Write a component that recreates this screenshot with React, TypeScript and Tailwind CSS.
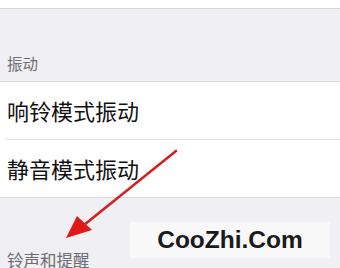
import * as React from 'react';

const cjk = { fontFamily: '"Noto Sans CJK SC", "Noto Sans", sans-serif' };

export default function App() {
	return (
		<div className="relative w-[340px] h-[268px] overflow-hidden bg-[#efeff4]" style={cjk}>
			<div className="h-[9px] bg-white border-b border-[#d6d6da]" />
			<div className="h-[72px] flex items-end px-[7px] pb-[6px]">
				<span className="text-[15.5px] leading-[24px] text-[#6d6d72]">振动</span>
			</div>
			<div className="bg-white border-y border-[#dcdce0]">
				<div className="h-[57px] flex items-center px-[7px]">
					<span className="text-[22px] text-[#111]">响铃模式振动</span>
				</div>
				<div className="ml-[5px] h-px bg-[#e2e2e5]" />
				<div className="h-[57px] flex items-center px-[7px]">
					<span className="text-[22px] text-[#111]">静音模式振动</span>
				</div>
			</div>
			<div className="pt-[50px] px-[7px]">
				<span className="text-[16.5px] leading-[24px] text-[#6d6d72]">铃声和提醒</span>
			</div>

			<div className="absolute left-[130px] top-[222px] w-[200px] h-[36px] bg-[#f8f8f9] flex items-center justify-center">
				<span
					className="text-[24.5px] font-bold text-[#1a1a1a] leading-none"
					style={{ fontFamily: '"Liberation Sans", Arial, sans-serif' }}
				>
					CooZhi.Com
				</span>
			</div>

			<svg className="absolute left-0 top-0" width="340" height="268" viewBox="0 0 340 268">
				<line x1="176" y1="151" x2="84" y2="225" stroke="#d42020" strokeWidth="2.6" strokeLinecap="round" />
				<polygon points="66,238 77,216 92,230" fill="#e01818" />
			</svg>
		</div>
	);
}
